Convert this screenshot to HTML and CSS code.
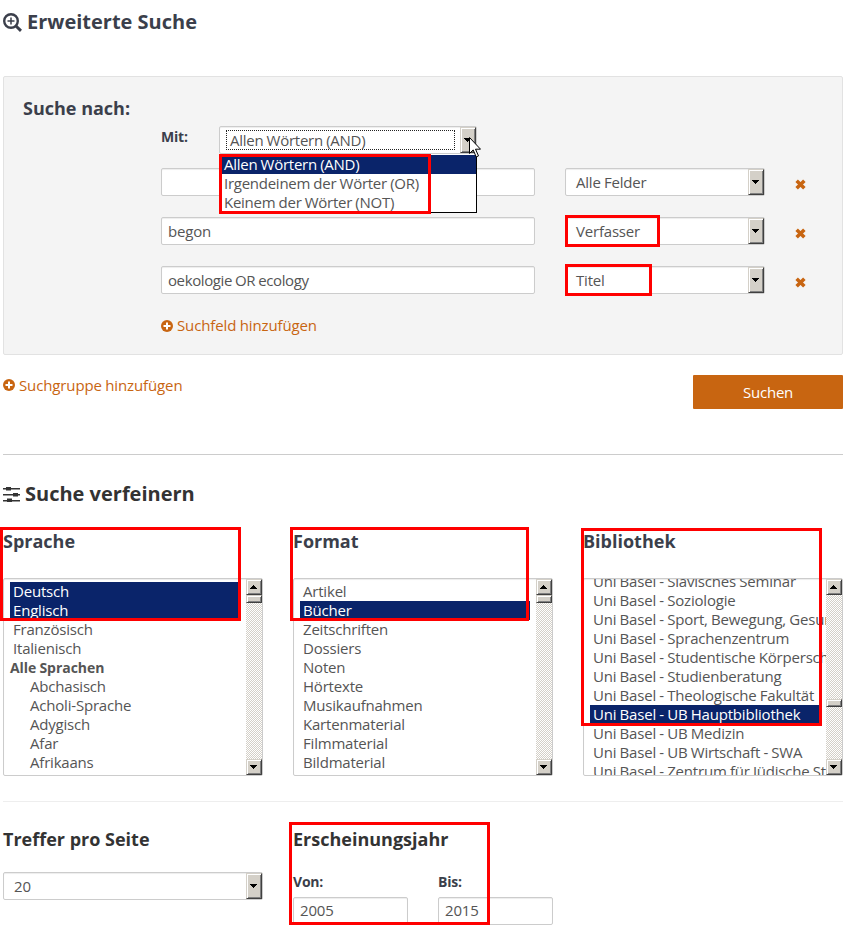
FILE: index.html
```html
<!DOCTYPE html>
<html lang="de">
<head>
<meta charset="utf-8">
<title>Erweiterte Suche</title>
<link rel="stylesheet" href="styles.css">
</head>
<body>
<svg class="defs" width="0" height="0">
  <symbol id="plus" viewBox="0 0 12 12"><circle cx="6" cy="6" r="6" fill="#c86511"/><path d="M6 2.500v7M2.500 6h7" stroke="#fff" stroke-width="2"/></symbol>
  <symbol id="cross" viewBox="0 0 10 10"><path d="M1.500 1.500l7 7M8.500 1.500l-7 7" stroke="#c86511" stroke-width="3.200"/></symbol>
  <symbol id="down" viewBox="0 0 7 4"><path d="M0 0h7v1H6v1H5v1H4v1H3V3H2V2H1V1H0z"/></symbol>
  <symbol id="up" viewBox="0 0 7 4"><path d="M0 4h7V3H6V2H5V1H4V0H3v1H2v1H1v1H0z"/></symbol>
</svg>
<main class="page">
  <h1 class="title"><svg width="19" height="19" viewBox="0 0 19 19" fill="none" stroke="#3b3f4b"><circle cx="8" cy="8" r="6.800" stroke-width="2.400"/><path d="M13 13l5 4.800" stroke-width="3"/><path d="M8 4.500v7M4.500 8h7" stroke-width="1.500"/></svg><span>Erweiterte Suche</span></h1>

  <section class="group">
    <h2 class="group-title">Suche nach:</h2>
    <div class="match">
      <span class="label">Mit:</span>
      <div class="select match-select"><span class="focus">Allen Wörtern (AND)</span><i class="btn"><svg class="arrow"><use href="#down"/></svg></i>
        <ul class="menu"><li class="on">Allen Wörtern (AND)</li><li>Irgendeinem der Wörter (OR)</li><li>Keinem der Wörter (NOT)</li></ul>
      </div>
    </div>
    <div class="row"><div class="input"></div><div class="select"><span>Alle Felder</span><i class="btn"><svg class="arrow"><use href="#down"/></svg></i></div><svg class="remove"><use href="#cross"/></svg></div>
    <div class="row"><div class="input">begon</div><div class="select"><span>Verfasser</span><i class="btn"><svg class="arrow"><use href="#down"/></svg></i></div><svg class="remove"><use href="#cross"/></svg></div>
    <div class="row"><div class="input query">oekologie OR ecology</div><div class="select"><span>Titel</span><i class="btn"><svg class="arrow"><use href="#down"/></svg></i></div><svg class="remove"><use href="#cross"/></svg></div>
    <a class="link add-field"><svg class="plus"><use href="#plus"/></svg>Suchfeld hinzufügen</a>
  </section>

  <div class="actions">
    <a class="link"><svg class="plus"><use href="#plus"/></svg>Suchgruppe hinzufügen</a>
    <div class="submit">Suchen</div>
  </div>

  <h2 class="title refine"><svg width="18" height="16" viewBox="0 0 18 16" fill="#333"><path d="M0 2h17v1.400H0zM0 8h17v1.400H0zM0 14h17v1.400H0zM3 1h5v3.500H3zM10 7h5v3.500h-5zM4 12.500h5V16H4z"/></svg><span>Suche verfeinern</span></h2>

  <div class="columns">
    <section>
      <h3>Sprache</h3>
      <div class="list">
        <ul><li class="on">Deutsch</li><li class="on">Englisch</li><li>Französisch</li><li>Italienisch</li><li class="optgroup">Alle Sprachen</li><li class="sub">Abchasisch</li><li class="sub">Acholi-Sprache</li><li class="sub">Adygisch</li><li class="sub">Afar</li><li class="sub">Afrikaans</li></ul>
        <div class="bar"><i class="btn"><svg class="arrow"><use href="#up"/></svg></i><i class="btn thumb"></i><i class="btn end"><svg class="arrow"><use href="#down"/></svg></i></div>
      </div>
    </section>
    <section>
      <h3>Format</h3>
      <div class="list">
        <ul><li>Artikel</li><li class="on">Bücher</li><li>Zeitschriften</li><li>Dossiers</li><li>Noten</li><li>Hörtexte</li><li>Musikaufnahmen</li><li>Kartenmaterial</li><li>Filmmaterial</li><li>Bildmaterial</li></ul>
        <div class="bar"><i class="btn"><svg class="arrow"><use href="#up"/></svg></i><i class="btn thumb"></i><i class="btn end"><svg class="arrow"><use href="#down"/></svg></i></div>
      </div>
    </section>
    <section>
      <h3>Bibliothek</h3>
      <div class="list scrolled">
        <ul><li>Uni Basel - Slavisches Seminar</li><li>Uni Basel - Soziologie</li><li>Uni Basel - Sport, Bewegung, Gesundheit</li><li>Uni Basel - Sprachenzentrum</li><li>Uni Basel - Studentische Körperschaft</li><li>Uni Basel - Studienberatung</li><li>Uni Basel - Theologische Fakultät</li><li class="on">Uni Basel - UB Hauptbibliothek</li><li>Uni Basel - UB Medizin</li><li>Uni Basel - UB Wirtschaft - SWA</li><li>Uni Basel - Zentrum für Jüdische Studien</li></ul>
        <div class="bar"><i class="btn"><svg class="arrow"><use href="#up"/></svg></i><i class="btn thumb"></i><i class="btn end"><svg class="arrow"><use href="#down"/></svg></i></div>
      </div>
    </section>
  </div>

  <div class="columns bottom">
    <section>
      <h3>Treffer pro Seite</h3>
      <div class="select per-page"><span>20</span><i class="btn"><svg class="arrow"><use href="#down"/></svg></i></div>
    </section>
    <section>
      <h3>Erscheinungsjahr</h3>
      <div class="years">
        <div><span class="label">Von:</span><div class="input">2005</div></div>
        <div><span class="label">Bis:</span><div class="input">2015</div></div>
      </div>
    </section>
  </div>

  <div class="mark mark-menu"></div>
  <div class="mark mark-author"></div>
  <div class="mark mark-titel"></div>
  <div class="mark mark-language"></div>
  <div class="mark mark-format"></div>
  <div class="mark mark-library"></div>
  <div class="mark mark-year"></div>
  <svg class="cursor" width="12" height="21" viewBox="0 0 12 21"><path d="M.5.5v16l3.700-3.600 3 7 2.300-1-3-6.700h5z" fill="#fff" stroke="#000"/></svg>
</main>
</body>
</html>
```
FILE: styles.css
```css
* { box-sizing: border-box; }
body { margin: 0; background: #fff; color: #555; font: 15px/19px "Open Sans", sans-serif; letter-spacing: -.2px; word-spacing: -.4px; }
h1, h2, h3, ul { margin: 0; padding: 0; }
h1, h2, h3 { letter-spacing: 0; word-spacing: 0; }
ul { list-style: none; }
.defs { position: absolute; }
.page { position: relative; width: 843px; height: 926px; padding-left: 3px; overflow: hidden; }
.title { display: flex; align-items: center; gap: 5px; height: 44px; font-size: 20px; line-height: 28px; font-weight: 700; color: #3b3f4b; }
h3, .group-title { font-size: 18px; line-height: 24px; font-weight: 700; color: #3b3f4b; }
.label { font-size: 14px; font-weight: 700; color: #3b3f4b; }

.group { height: 279px; margin-top: 32px; padding: 19px 0 0 157px; background: #f4f4f4; border: 1px solid #e2e2e2; border-radius: 2px; }
.group-title { margin-left: -138px; }
.match { display: flex; margin-top: 6px; height: 28px; }
.match .label { width: 58px; padding-top: 1px; }
.row { display: flex; align-items: center; margin-top: 14px; }
.row + .row { margin-top: 21px; }
.row .input { width: 374px; margin-right: 30px; }
.row .select { width: 200px; }
.remove { width: 11px; height: 11px; margin: 4px 0 0 30px; }

.input, .select { height: 28px; background: #fff; border: 1px solid #ccc; border-radius: 2px; box-shadow: inset 0 1px 1px rgba(0,0,0,.075); line-height: 27px; }
.input { padding-left: 6px; }
.query { letter-spacing: -.4px; }
.select { position: relative; display: flex; justify-content: space-between; padding: 0; }
.select > span { padding-left: 10px; }
.match-select { width: 258px; }
.select > .focus { width: 229px; height: 20px; margin: 3px 0 0 6px; padding-left: 3px; border: 1px dotted #222; line-height: 19px; letter-spacing: -.26px; }
.menu { position: absolute; z-index: 2; top: 27px; left: -1px; width: 258px; height: 59px; padding: 1px 0; background: #fff; border: 1px solid #000; border-top: 0; line-height: 19px; letter-spacing: -.26px; }
.menu li { height: 19px; padding-left: 4px; }
.on { background: #0a246a; color: #fff; }

.btn { display: flex; align-items: center; justify-content: center; flex: none; width: 16px; padding-right: 1px; background: #d4d0c8; border: 1px solid; border-color: #d4d0c8 #404040 #404040 #d4d0c8; box-shadow: inset 1px 1px #fff, inset -1px -1px #808080; }
.arrow { width: 7px; height: 4px; }

.link { display: flex; align-items: center; gap: 4px; color: #c86511; letter-spacing: -.12px; }
.plus { width: 12px; height: 12px; }
.add-field { margin-top: 22px; }
.actions { display: flex; justify-content: space-between; height: 100px; padding-top: 20px; border-bottom: 1px solid #ccc; }
.actions .link { height: 20px; }
.submit { width: 150px; height: 34px; background: #c86511; border-radius: 1px; color: #fff; text-align: center; line-height: 35px; }

.refine { height: 44px; margin-top: 17px; gap: 4px; color: #333; }
.columns { display: grid; grid-template-columns: 260px 260px 260px; gap: 30px; height: 286px; padding-top: 13px; border-bottom: 1px solid #eee; }
.list { display: flex; justify-content: space-between; height: 198px; margin-top: 25px; border: 1px solid #ccc; border-radius: 2px; box-shadow: inset 0 1px 1px rgba(0,0,0,.075); overflow: hidden; }
.list ul { width: 242px; padding: 3px 6px 0 6px; overflow: hidden; white-space: nowrap; }
.list li { height: 19px; padding-left: 3px; }
.list .optgroup { padding-left: 0; font-weight: 700; font-size: 14px; letter-spacing: -.05px; }
.list .sub { padding-left: 20px; }
.scrolled ul { height: 206px; margin-top: -10px; padding-right: 0; }
.scrolled .on { margin-right: 6px; }
.bar { display: flex; flex-direction: column; flex: none; width: 16px; background: repeating-conic-gradient(#fff 0 25%, #d4d0c8 0 50%) 0 0 / 2px 2px; }
.bar .btn { height: 16px; }
.bar .thumb { height: 8px; }
.bar .end { margin-top: auto; }
.scrolled .thumb { margin-top: 104px; }

.bottom { height: 124px; padding-top: 25px; border: 0; }
.bottom h3 { color: #333; }
.per-page { margin-top: 21px; }
.years { display: flex; gap: 30px; margin-top: 21px; }
.years > div { width: 115px; }
.years .label { display: block; height: 25px; }
.years .input { line-height: 25px; }

.mark { position: absolute; z-index: 3; border: 3px solid #f00; }
.mark-menu { left: 219px; top: 154px; width: 212px; height: 60px; }
.mark-author { left: 565px; top: 215px; width: 95px; height: 32px; }
.mark-titel { left: 565px; top: 264px; width: 87px; height: 32px; }
.mark-language { left: 0; top: 527px; width: 241px; height: 94px; }
.mark-format { left: 290px; top: 527px; width: 239px; height: 94px; }
.mark-library { left: 581px; top: 528px; width: 241px; height: 198px; }
.mark-year { left: 289px; top: 822px; width: 201px; height: 103px; }
.cursor { position: absolute; z-index: 4; left: 469px; top: 137px; }
```
